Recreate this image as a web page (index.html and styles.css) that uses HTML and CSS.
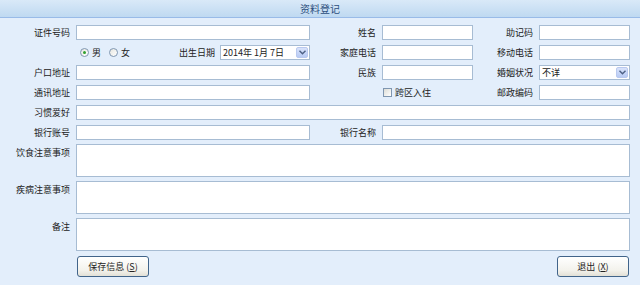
FILE: index.html
```html
<!DOCTYPE html>
<html lang="zh-CN">
<head>
    <meta charset="UTF-8">
    <meta name="viewport" content="width=device-width, initial-scale=1.0">
    <title>资料登记</title>
    <link rel="stylesheet" href="styles.css">
</head>
<body>
    <div class="panel">
        <div class="panel-title">资料登记</div>
        <div class="form">
            <div class="fields">
                <label class="lbl">证件号码</label><input class="txt" type="text">
                <label class="lbl">姓名</label><input class="txt" type="text">
                <label class="lbl">助记码</label><input class="txt" type="text">

                <span class="lbl"></span>
                <div class="sex-row">
                    <span class="radio checked"></span><span class="opt">男</span>
                    <span class="radio"></span><span class="opt">女</span>
                    <span class="lbl-inline">出生日期</span>
                    <div class="combo date">
                        <span class="combo-text">2014年 1月 7日</span>
                        <span class="arrow"><svg width="7" height="5" viewBox="0 0 7 5"><path d="M0.5 0.8 L3.5 3.8 L6.5 0.8" fill="none" stroke="#4d6185" stroke-width="1.4"/></svg></span>
                    </div>
                </div>
                <label class="lbl">家庭电话</label><input class="txt" type="text">
                <label class="lbl">移动电话</label><input class="txt" type="text">

                <label class="lbl">户口地址</label><input class="txt" type="text">
                <label class="lbl">民族</label><input class="txt" type="text">
                <label class="lbl">婚姻状况</label>
                <div class="combo">
                    <span class="combo-text">不详</span>
                    <span class="arrow"><svg width="7" height="5" viewBox="0 0 7 5"><path d="M0.5 0.8 L3.5 3.8 L6.5 0.8" fill="none" stroke="#4d6185" stroke-width="1.4"/></svg></span>
                </div>

                <label class="lbl">通讯地址</label><input class="txt" type="text">
                <span class="lbl"></span>
                <div class="check-row"><span class="check"></span><span class="opt">跨区入住</span></div>
                <label class="lbl">邮政编码</label><input class="txt" type="text">

                <label class="lbl">习惯爱好</label><input class="txt span-5" type="text">

                <label class="lbl">银行账号</label><input class="txt" type="text">
                <label class="lbl">银行名称</label><input class="txt span-3" type="text">
            </div>

            <div class="notes">
                <label class="lbl top">饮食注意事项</label><textarea class="area"></textarea>
                <label class="lbl top">疾病注意事项</label><textarea class="area"></textarea>
                <label class="lbl top">备注</label><textarea class="area"></textarea>
            </div>

            <div class="actions">
                <button class="btn">保存信息 (<u>S</u>)</button>
                <button class="btn">退出 (<u>X</u>)</button>
            </div>
        </div>
    </div>
</body>
</html>
```

FILE: styles.css
```css
body {
    margin: 0;
    font-family: "Noto Sans CJK SC", "Liberation Sans", sans-serif;
    font-size: 9px;
    color: #222;
    background: #e3eefb;
}
.panel {
    width: 640px;
    height: 285px;
    background: #e3eefb;
}
.panel-title {
    height: 17px;
    line-height: 17px;
    font-size: 10px;
    text-align: center;
    color: #2b4e7c;
    background: linear-gradient(#d9e9f8, #bfd9f1);
    border-bottom: 1px solid #99bbe8;
}
.form {
    padding-top: 7px;
}
.fields,
.notes {
    display: grid;
    grid-template-columns: 70px 234px 60px 91px 54px 91px;
    column-gap: 6px;
}
.fields {
    grid-auto-rows: 15px;
    row-gap: 5px;
}
.notes {
    grid-auto-rows: 33px;
    row-gap: 4px;
    margin-top: 4px;
}
.lbl {
    display: flex;
    align-items: center;
    justify-content: flex-end;
    white-space: nowrap;
}
.lbl.top {
    align-items: flex-start;
    padding-top: 3px;
    line-height: 12px;
}
.txt,
.area {
    box-sizing: border-box;
    width: 100%;
    margin: 0;
    padding: 0 2px;
    border: 1px solid #a7bcd3;
    background: #fff;
    font: inherit;
    outline: none;
}
.txt {
    height: 15px;
}
.area {
    height: 33px;
    resize: none;
    grid-column: span 5;
}
.span-5 {
    grid-column: span 5;
}
.span-3 {
    grid-column: span 3;
}
.sex-row,
.check-row {
    display: flex;
    align-items: center;
}
.sex-row {
    padding-left: 4px;
}
.check-row {
    padding-left: 1px;
}
.radio {
    box-sizing: border-box;
    width: 9px;
    height: 9px;
    border: 1px solid #7f96b0;
    border-radius: 50%;
    background: linear-gradient(135deg, #e6e6e0, #fff);
    display: flex;
    align-items: center;
    justify-content: center;
}
.radio.checked::after {
    content: "";
    width: 3px;
    height: 3px;
    border-radius: 50%;
    background: #2fa02f;
}
.check {
    box-sizing: border-box;
    width: 9px;
    height: 9px;
    border: 1px solid #7f96b0;
    background: linear-gradient(135deg, #dcdcd6, #fff);
}
.opt {
    margin-left: 3px;
    margin-right: 8px;
}
.lbl-inline {
    margin-left: auto;
    margin-right: 5px;
}
.combo {
    box-sizing: border-box;
    height: 15px;
    border: 1px solid #a7bcd3;
    background: #fff;
    display: flex;
    align-items: center;
    padding: 1px;
}
.combo.date {
    width: 90px;
}
.combo-text {
    flex: 1;
    padding-left: 1px;
    white-space: nowrap;
    overflow: hidden;
}
.arrow {
    width: 12px;
    height: 11px;
    box-sizing: border-box;
    border: 1px solid #b9c9ef;
    border-radius: 2px;
    background: linear-gradient(#d8e3fb, #b9cbf4);
    display: flex;
    align-items: center;
    justify-content: center;
}
.arrow svg {
    display: block;
}
.actions {
    display: flex;
    justify-content: space-between;
    margin-top: 5px;
    padding-left: 77px;
    padding-right: 11px;
}
.btn {
    width: 72px;
    height: 21px;
    padding: 0;
    border: 1px solid #41648a;
    border-radius: 3px;
    background: linear-gradient(#ffffff, #f3f2ec 70%, #e2e0d6);
    font: inherit;
    color: #222;
    cursor: pointer;
}
```
